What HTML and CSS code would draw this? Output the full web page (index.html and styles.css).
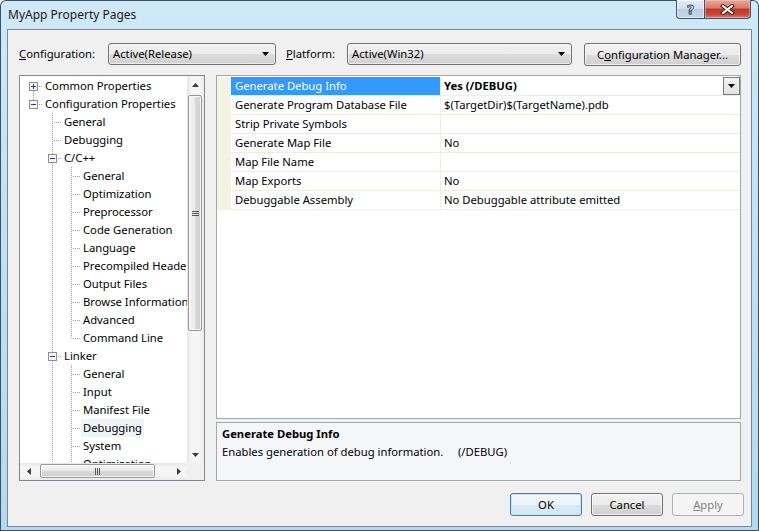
FILE: index.html
```html
<!DOCTYPE html>
<html lang="en">
<head>
    <meta charset="UTF-8">
    <title>MyApp Property Pages</title>
    <link rel="stylesheet" href="styles.css">
</head>
<body>
    <div class="window">
        <div class="titlebar">
            <span class="title">MyApp Property Pages</span>
            <div class="caption">
                <span class="cap help">?</span>
                <span class="cap close">
                    <svg width="15" height="11" viewBox="0 0 15 11">
                        <path d="M3 2l9 7M12 2l-9 7" stroke="#3b1512" stroke-width="4" stroke-linecap="square"/>
                        <path d="M3 2l9 7M12 2l-9 7" stroke="#fff" stroke-width="2" stroke-linecap="square"/>
                    </svg>
                </span>
            </div>
        </div>

        <div class="client">
            <div class="toolbar">
                <label class="lbl lbl-config"><u>C</u>onfiguration:</label>
                <div class="combo combo-config">Active(Release)<svg class="arrow" width="7" height="4"><path d="M0 0h7L3.5 4z" fill="#000"/></svg></div>
                <label class="lbl lbl-platform"><u>P</u>latform:</label>
                <div class="combo combo-platform">Active(Win32)<svg class="arrow" width="7" height="4"><path d="M0 0h7L3.5 4z" fill="#000"/></svg></div>
                <button class="btn btn-manager">C<u>o</u>nfiguration Manager...</button>
            </div>

            <div class="main">
                <div class="tree">
                    <div class="tree-items">
                        <div class="node"><i class="g first"><svg class="box" width="9" height="9"><rect x="0.5" y="0.5" width="8" height="8" fill="#f6f6f6" stroke="#8e8f8f"/><path d="M2 4.5h5M4.5 2v5" stroke="#1f3f8c"/></svg></i><span class="t">Common Properties</span></div>
                        <div class="node"><i class="g elbow"><svg class="box" width="9" height="9"><rect x="0.5" y="0.5" width="8" height="8" fill="#f6f6f6" stroke="#8e8f8f"/><path d="M2 4.5h5" stroke="#1f3f8c"/></svg></i><span class="t">Configuration Properties</span></div>
                        <div class="node"><i class="g"></i><i class="g tee"></i><span class="t">General</span></div>
                        <div class="node"><i class="g"></i><i class="g tee"></i><span class="t">Debugging</span></div>
                        <div class="node"><i class="g"></i><i class="g tee"><svg class="box" width="9" height="9"><rect x="0.5" y="0.5" width="8" height="8" fill="#f6f6f6" stroke="#8e8f8f"/><path d="M2 4.5h5" stroke="#1f3f8c"/></svg></i><span class="t">C/C++</span></div>
                        <div class="node"><i class="g"></i><i class="g pipe"></i><i class="g tee"></i><span class="t">General</span></div>
                        <div class="node"><i class="g"></i><i class="g pipe"></i><i class="g tee"></i><span class="t">Optimization</span></div>
                        <div class="node"><i class="g"></i><i class="g pipe"></i><i class="g tee"></i><span class="t">Preprocessor</span></div>
                        <div class="node"><i class="g"></i><i class="g pipe"></i><i class="g tee"></i><span class="t">Code Generation</span></div>
                        <div class="node"><i class="g"></i><i class="g pipe"></i><i class="g tee"></i><span class="t">Language</span></div>
                        <div class="node"><i class="g"></i><i class="g pipe"></i><i class="g tee"></i><span class="t">Precompiled Headers</span></div>
                        <div class="node"><i class="g"></i><i class="g pipe"></i><i class="g tee"></i><span class="t">Output Files</span></div>
                        <div class="node"><i class="g"></i><i class="g pipe"></i><i class="g tee"></i><span class="t">Browse Information</span></div>
                        <div class="node"><i class="g"></i><i class="g pipe"></i><i class="g tee"></i><span class="t">Advanced</span></div>
                        <div class="node"><i class="g"></i><i class="g pipe"></i><i class="g elbow"></i><span class="t">Command Line</span></div>
                        <div class="node"><i class="g"></i><i class="g tee"><svg class="box" width="9" height="9"><rect x="0.5" y="0.5" width="8" height="8" fill="#f6f6f6" stroke="#8e8f8f"/><path d="M2 4.5h5" stroke="#1f3f8c"/></svg></i><span class="t">Linker</span></div>
                        <div class="node"><i class="g"></i><i class="g pipe"></i><i class="g tee"></i><span class="t">General</span></div>
                        <div class="node"><i class="g"></i><i class="g pipe"></i><i class="g tee"></i><span class="t">Input</span></div>
                        <div class="node"><i class="g"></i><i class="g pipe"></i><i class="g tee"></i><span class="t">Manifest File</span></div>
                        <div class="node"><i class="g"></i><i class="g pipe"></i><i class="g tee"></i><span class="t sel">Debugging</span></div>
                        <div class="node"><i class="g"></i><i class="g pipe"></i><i class="g tee"></i><span class="t">System</span></div>
                        <div class="node"><i class="g"></i><i class="g pipe"></i><i class="g tee"></i><span class="t">Optimization</span></div>
                    </div>

                    <div class="vscroll">
                        <span class="sarrow"><svg width="7" height="4"><path d="M3.5 0L7 4H0z" fill="#3a3a3a"/></svg></span>
                        <div class="vtrack"><div class="vthumb"><svg width="7" height="5"><path d="M0 .5h7M0 2.5h7M0 4.5h7" stroke="#555"/></svg></div></div>
                        <span class="sarrow"><svg width="7" height="4"><path d="M0 0h7L3.5 4z" fill="#3a3a3a"/></svg></span>
                    </div>
                    <div class="hscroll">
                        <span class="sarrow"><svg width="4" height="7"><path d="M0 3.5L4 0v7z" fill="#3a3a3a"/></svg></span>
                        <div class="htrack"><div class="hthumb"><svg width="5" height="7"><path d="M.5 0v7M2.5 0v7M4.5 0v7" stroke="#555"/></svg></div></div>
                        <span class="sarrow"><svg width="4" height="7"><path d="M0 0l4 3.5L0 7z" fill="#3a3a3a"/></svg></span>
                    </div>
                    <div class="corner"></div>
                </div>

                <div class="props">
                    <div class="grid">
                        <div class="prow">
                            <span class="mg"></span>
                            <span class="pn sel">Generate Debug Info</span>
                            <span class="pv"><b>Yes (/DEBUG)</b><span class="dd"><svg width="7" height="4"><path d="M0 0h7L3.5 4z" fill="#000"/></svg></span></span>
                        </div>
                        <div class="prow"><span class="mg"></span><span class="pn">Generate Program Database File</span><span class="pv">$(TargetDir)$(TargetName).pdb</span></div>
                        <div class="prow"><span class="mg"></span><span class="pn">Strip Private Symbols</span><span class="pv"></span></div>
                        <div class="prow"><span class="mg"></span><span class="pn">Generate Map File</span><span class="pv">No</span></div>
                        <div class="prow"><span class="mg"></span><span class="pn">Map File Name</span><span class="pv"></span></div>
                        <div class="prow"><span class="mg"></span><span class="pn">Map Exports</span><span class="pv">No</span></div>
                        <div class="prow"><span class="mg"></span><span class="pn">Debuggable Assembly</span><span class="pv">No Debuggable attribute emitted</span></div>
                    </div>
                    <div class="desc">
                        <div class="desc-title">Generate Debug Info</div>
                        <div class="desc-text">Enables generation of debug information.     (/DEBUG)</div>
                    </div>
                </div>
            </div>

            <div class="buttons">
                <button class="btn dlg default">OK</button>
                <button class="btn dlg">Cancel</button>
                <button class="btn dlg disabled"><u>A</u>pply</button>
            </div>
        </div>
    </div>
</body>
</html>
```

FILE: styles.css
```css
body {
    margin: 0;
    background: #fff;
    font-family: "Noto Sans", sans-serif;
    font-size: 11.25px;
    color: #000;
}
.window {
    width: 759px;
    height: 531px;
    box-sizing: border-box;
    border-radius: 6px 6px 0 0;
    background: linear-gradient(#cfe9f7, #bfe1f3 45%, #b3d9ee);
    box-shadow: inset 0 0 0 1px #3c5164;
    display: flex;
    flex-direction: column;
    overflow: hidden;
}

/* title bar */
.titlebar {
    height: 29px;
    flex: none;
    display: flex;
    justify-content: space-between;
    align-items: flex-start;
}
.title {
    margin: 7px 0 0 8px;
    line-height: 16px;
    font-size: 12px;
    color: #1a1a1a;
}
.caption {
    display: flex;
    margin-right: 8px;
}
.cap {
    height: 19px;
    display: flex;
    align-items: center;
    justify-content: center;
    border: 1px solid #3e5367;
    border-top: none;
    box-sizing: border-box;
}
.help {
    width: 28px;
    border-right: none;
    border-radius: 0 0 0 4px;
    background: linear-gradient(#e4eef6, #cfdfec 50%, #b9cfe1 51%, #c6d9e8);
    box-shadow: inset 0 0 0 1px rgba(255,255,255,.5);
    font-family: "DejaVu Sans", sans-serif;
    font-weight: bold;
    font-size: 13px;
    color: #f4f8fb;
    -webkit-text-stroke: 0.8px #2b3d50;
}
.close {
    width: 47px;
    border-radius: 0 0 4px 0;
    background: linear-gradient(#e9a99b, #d77868 45%, #c2352a 50%, #c8473a 80%, #e0806a);
    box-shadow: inset 0 0 0 1px rgba(255,210,200,.45);
}

/* client area */
.client {
    height: 498px;
    margin: 0 7px;
    box-sizing: border-box;
    border: 1px solid #7b8793;
    background: #f0f0f0;
    display: flex;
    flex-direction: column;
}
.toolbar {
    display: flex;
    align-items: flex-start;
    padding: 13px 0 0 11px;
    height: 23px;
}
.lbl {
    line-height: 22px;
}
.lbl-config { width: 89px; }
.lbl-platform { width: 61px; }
.combo {
    height: 22px;
    box-sizing: border-box;
    border: 1px solid #707070;
    border-radius: 3px;
    background: linear-gradient(#f2f2f2, #ebebeb 50%, #dddddd 51%, #cfcfcf);
    box-shadow: inset 0 0 0 1px rgba(255,255,255,.6);
    display: flex;
    align-items: center;
    padding-left: 4px;
    line-height: 20px;
}
.combo .arrow {
    margin-left: auto;
    margin-right: 6px;
}
.combo-config { width: 168px; margin-right: 10px; }
.combo-platform { width: 225px; margin-right: 12px; }

.btn {
    height: 23px;
    box-sizing: border-box;
    border: 1px solid #707070;
    border-radius: 3px;
    background: linear-gradient(#f2f2f2, #ebebeb 50%, #dddddd 51%, #cfcfcf);
    box-shadow: inset 0 0 0 1px rgba(255,255,255,.7);
    font: inherit;
    color: #000;
    padding: 0;
    line-height: 21px;
}
.btn-manager { width: 157px; }

/* main panes */
.main {
    display: flex;
    gap: 11px;
    padding-left: 11px;
    margin-top: 9px;
    height: 406px;
}

.tree {
    --v: repeating-linear-gradient(#a0a0a0 0 1px, transparent 1px 2px);
    --h: repeating-linear-gradient(90deg, #a0a0a0 0 1px, transparent 1px 2px);
    width: 186px;
    box-sizing: border-box;
    border: 1px solid #828790;
    background: #fff;
    display: grid;
    grid-template-columns: 1fr 17px;
    grid-template-rows: 1fr 17px;
}
.tree-items {
    overflow: hidden;
    padding: 1px 0 0 4px;
}
.node {
    display: flex;
    height: 18px;
    line-height: 18px;
}
.g {
    flex: none;
    width: 19px;
    height: 18px;
    display: flex;
    align-items: center;
    background-repeat: no-repeat;
}
.g.pipe {
    background-image: var(--v);
    background-position: 9px 0;
    background-size: 1px 18px;
}
.g.tee {
    background-image: var(--v), var(--h);
    background-position: 9px 0, 11px 9px;
    background-size: 1px 18px, 8px 1px;
}
.g.elbow {
    background-image: var(--v), var(--h);
    background-position: 9px 0, 11px 9px;
    background-size: 1px 9px, 8px 1px;
}
.g.first {
    background-image: var(--v), var(--h);
    background-position: 9px 10px, 11px 9px;
    background-size: 1px 8px, 8px 1px;
}
.box {
    margin-left: 5px;
    display: block;
}
.t {
    padding: 0 2px;
    white-space: nowrap;
}
.t.sel {
    background: #f0f3f6;
}

.vscroll {
    display: flex;
    flex-direction: column;
    background: linear-gradient(90deg, #e6e6e6, #f5f5f5 25%, #f5f5f5 75%, #ebebeb);
}
.hscroll {
    display: flex;
    background: linear-gradient(#e6e6e6, #f5f5f5 25%, #f5f5f5 75%, #ebebeb);
}
.sarrow {
    flex: none;
    width: 17px;
    height: 17px;
    display: flex;
    align-items: center;
    justify-content: center;
}
.vtrack {
    flex: 1;
    padding: 2px 2px 0 1px;
}
.vthumb {
    height: 236px;
    box-sizing: border-box;
    border: 1px solid #979797;
    border-radius: 2px;
    background: linear-gradient(90deg, #f5f5f5, #e9e9e9 50%, #d9d9d9 51%, #cfcfcf);
    box-shadow: inset 0 0 0 1px rgba(255,255,255,.8);
    display: flex;
    align-items: center;
    justify-content: center;
}
.htrack {
    flex: 1;
    display: flex;
    padding: 1px 0 2px 3px;
}
.hthumb {
    width: 115px;
    box-sizing: border-box;
    border: 1px solid #979797;
    border-radius: 2px;
    background: linear-gradient(#f5f5f5, #e9e9e9 50%, #d9d9d9 51%, #cfcfcf);
    box-shadow: inset 0 0 0 1px rgba(255,255,255,.8);
    display: flex;
    align-items: center;
    justify-content: center;
}
.corner {
    background: #f0f0f0;
}

/* property grid */
.props {
    width: 525px;
    display: flex;
    flex-direction: column;
    gap: 3px;
}
.grid {
    height: 344px;
    box-sizing: border-box;
    border: 1px solid #a2a9aa;
    background: #fff;
    padding-top: 1px;
}
.prow {
    display: flex;
    height: 19px;
    line-height: 18px;
}
.mg {
    flex: none;
    width: 14px;
    background: #f3f3e4;
}
.pn, .pv {
    border-bottom: 1px solid #efefdf;
    white-space: nowrap;
    overflow: hidden;
}
.pn {
    flex: none;
    width: 210px;
    box-sizing: border-box;
    border-right: 1px solid #efefdf;
    padding-left: 4px;
}
.pn.sel {
    background: #3399ff;
    color: #fff;
}
.pv {
    flex: 1;
    display: flex;
    padding-left: 3px;
}
.dd {
    margin-left: auto;
    width: 17px;
    height: 18px;
    box-sizing: border-box;
    border: 1px solid #7a7a7a;
    background: linear-gradient(#f4f4f4, #e2e2e2);
    display: flex;
    align-items: center;
    justify-content: center;
}

.desc {
    height: 59px;
    box-sizing: border-box;
    border: 1px solid #a2a9aa;
    background: #f5f6f7;
    padding: 2px 5px;
    line-height: 18px;
}
.desc-title {
    font-weight: bold;
}
.desc-text {
    white-space: pre;
}

/* dialog buttons */
.buttons {
    display: flex;
    justify-content: flex-end;
    gap: 9px;
    padding-right: 7px;
    margin-top: 12px;
}
.btn.dlg {
    width: 72px;
}
.btn.default {
    border-color: #3c7fb1;
    background: linear-gradient(#f4f9fc, #e9f3f9 50%, #dbebf5 51%, #d2e6f2);
    box-shadow: inset 0 0 0 1px #c4e5f6;
}
.btn.disabled {
    border-color: #adb2b5;
    background: #f4f4f4;
    box-shadow: none;
    color: #838383;
}
```
